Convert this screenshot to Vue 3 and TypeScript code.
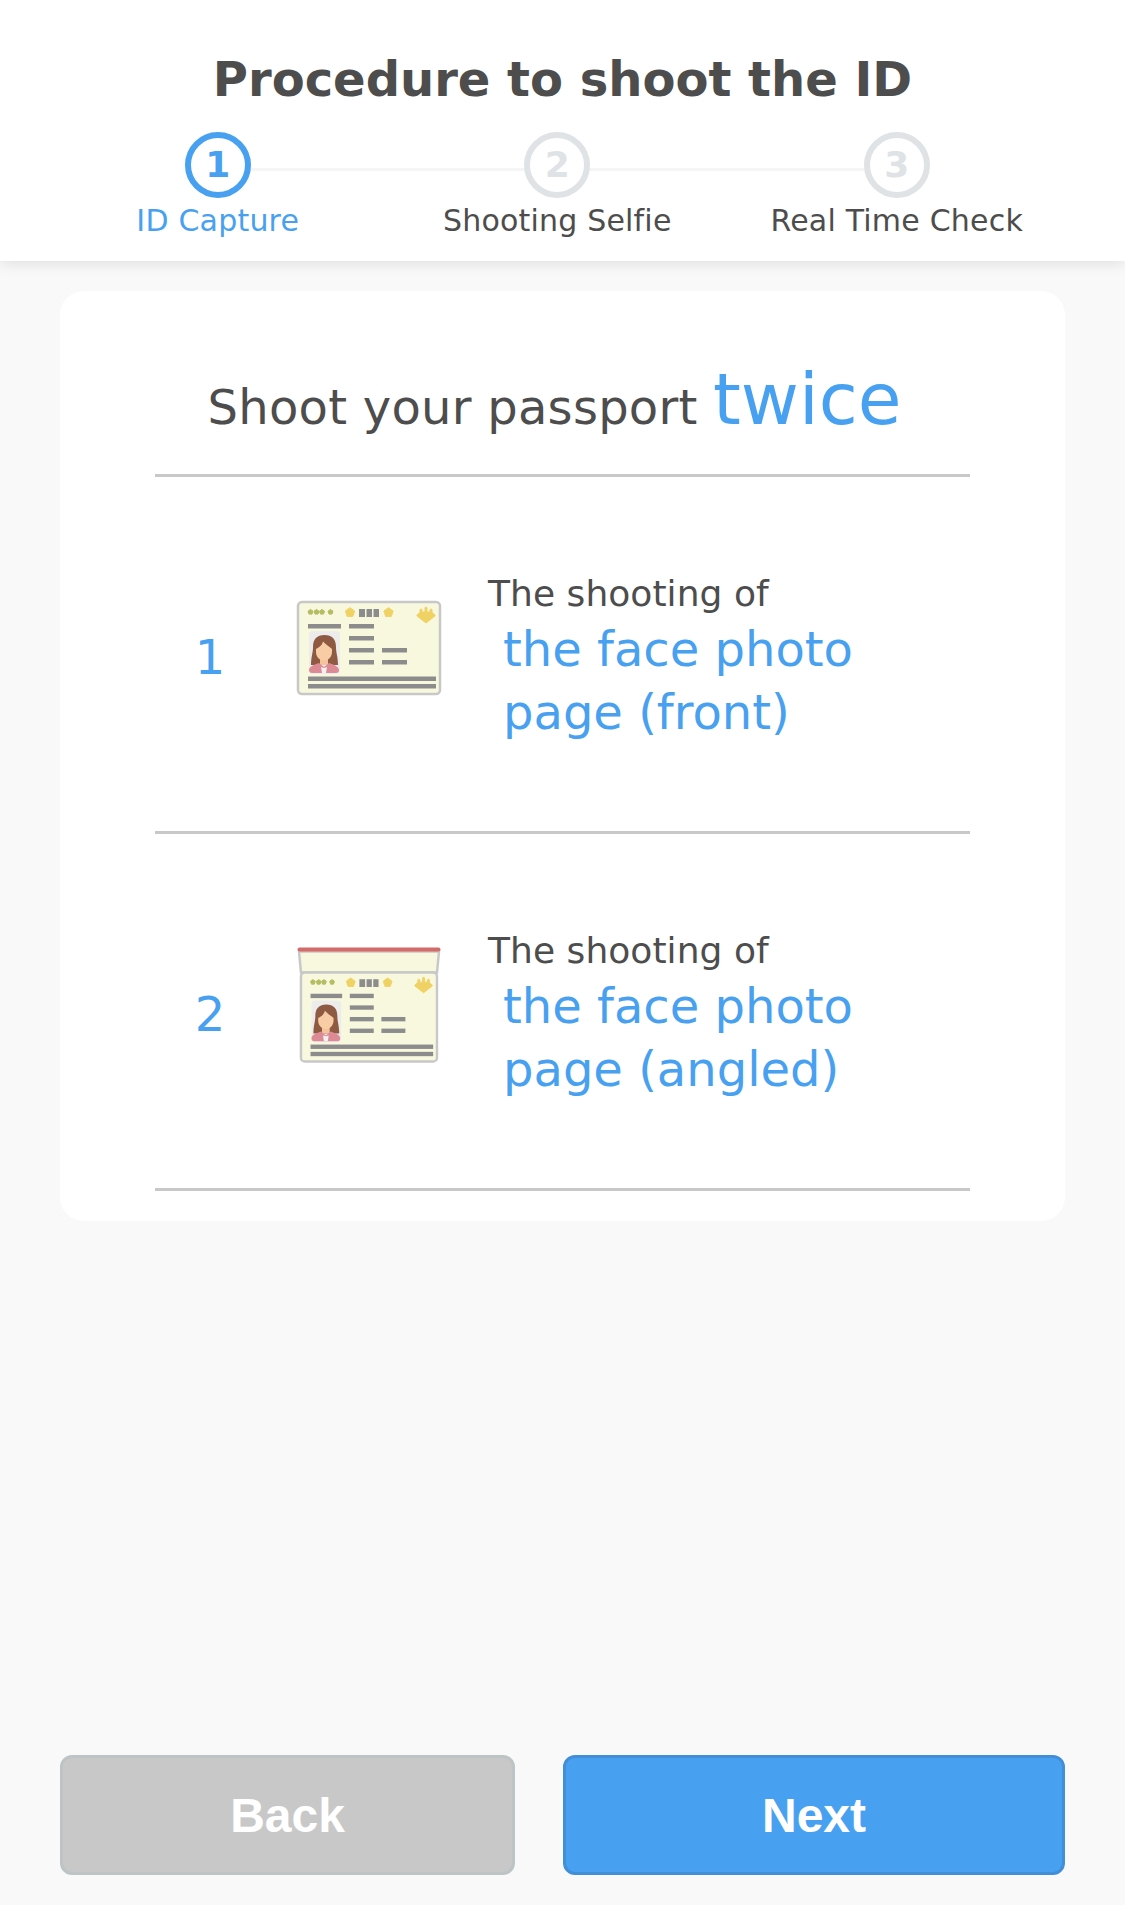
<script setup lang="ts">
const steps = [
  { no: 1, label: 'ID Capture', active: true },
  { no: 2, label: 'Shooting Selfie', active: false },
  { no: 3, label: 'Real Time Check', active: false },
]

const rows = [
  { no: 1, lines: ['the face photo', 'page (front)'], angled: false },
  { no: 2, lines: ['the face photo', 'page (angled)'], angled: true },
]

// grey bars on the card, [x, y, width]
const bars = [
  [28, 39, 33], [69, 39, 25], [69, 51, 25], [69, 63, 25], [102, 63, 25],
  [69, 75, 25], [102, 75, 25], [28, 91.5, 128], [28, 99, 128],
]

function pentagon(cx: number, cy: number, r: number): string {
  const pts: string[] = []
  for (let i = 0; i < 5; i++) {
    const a = -Math.PI / 2 + (i * 2 * Math.PI) / 5
    pts.push((cx + r * Math.cos(a)).toFixed(1) + ',' + (cy + r * Math.sin(a)).toFixed(1))
  }
  return pts.join(' ')
}
</script>

<template>
  <div class="page">
    <header class="head">
      <h1 class="title">Procedure to shoot the ID</h1>
      <div class="stepper">
        <div class="track"></div>
        <div v-for="s in steps" :key="s.no" class="step" :class="{ active: s.active }">
          <div class="circle">{{ s.no }}</div>
          <div class="label">{{ s.label }}</div>
        </div>
      </div>
    </header>

    <main class="card">
      <div class="card-title">Shoot your passport <span class="big">twice</span></div>
      <div v-for="r in rows" :key="r.no" class="row">
        <div class="num">{{ r.no }}</div>
        <svg class="pic" :viewBox="r.angled ? '14 0.5 150 150' : '14 -6 150 150'" width="150" height="150">
          <template v-if="r.angled">
            <path d="M19 16 H159 L157 37 H21 Z" fill="#f8f8de" stroke="#c8c8c8" stroke-width="2.5" />
            <rect x="17.500" y="12" width="143" height="4" rx="2" fill="#d46a6a" />
          </template>
          <g :transform="r.angled ? 'translate(3.7 20.5) scale(0.958 0.968)' : 'translate(0 0)'">
            <rect x="18" y="17" width="142" height="92" rx="4" fill="#f8f8de" stroke="#c8c8c8" stroke-width="2.5" />
            <polygon
              v-for="x in [30.5, 36.5, 42, 50.5]"
              :key="x"
              :points="pentagon(x, 27, 2.6)"
              fill="#b5bd63"
              stroke="#b5bd63"
              stroke-width="1"
              stroke-linejoin="round"
            />
            <g fill="#f0d264" stroke="#f0d264" stroke-width="1" stroke-linejoin="round">
              <polygon :points="pentagon(70, 27.5, 4.8)" />
              <polygon :points="pentagon(108.5, 27.5, 4.8)" />
              <path d="M137 30 L140 27.500 V24.500 Q141 23.500 142 24.500 V27 H145 V22.500 Q146 21.500 147 22.500 V27 H150 V24.500 Q151 23.500 152 24.500 V27.500 L155 30 V31 L146 38 L137 31 Z" />
            </g>
            <rect x="79" y="24" width="6" height="8" fill="#8c8c8c" />
            <rect x="86.500" y="24" width="5.500" height="8" fill="#8c8c8c" />
            <rect x="93.500" y="24" width="5.500" height="8" fill="#8c8c8c" />
            <rect v-for="b in bars" :key="b[0] + '-' + b[1]" :x="b[0]" :y="b[1]" :width="b[2]" height="4.500" fill="#8c8c8c" />
            <rect x="29" y="46" width="31" height="43" rx="4" fill="#ececec" />
            <path d="M31 80 C31 72 33 68 33 62 C33 54 37 50 44.500 50 C52 50 56 54 56 62 C56 68 58 72 58 80 Z" fill="#8f5a42" />
            <rect x="40" y="72" width="8" height="8" fill="#f4c39c" />
            <path d="M29 85 C29 82 33 80 39 78 L44 82 L49 78 C55 80 59 82 59 85 C59 87 58 88 56 88 H32 C30 88 29 87 29 85 Z" fill="#dd8a94" />
            <path d="M41 82 L44 83 L47 82 L46 88 H42 Z" fill="#f0f0f0" />
            <path d="M36 64 C38 63 42 61 43 56.500 C46 60 50 62 52 64 V67 C52 72 48 75.500 44 75.500 C40 75.500 36 72 36 67 Z" fill="#f8cda6" />
          </g>
        </svg>
        <div class="desc">
          <div class="desc-top">The shooting of</div>
          <div v-for="l in r.lines" :key="l" class="desc-line">{{ l }}</div>
        </div>
      </div>
    </main>

    <footer class="btns">
      <button class="btn back">Back</button>
      <button class="btn next">Next</button>
    </footer>
  </div>
</template>

<style scoped>
* {
  box-sizing: border-box;
}

.page {
  min-height: 1905px;
  background: #f9f9f9;
  display: flex;
  flex-direction: column;
  font-family: "DejaVu Sans", sans-serif;
  color: #4d4d4d;
}

.head {
  height: 261px;
  background: #fff;
  box-shadow: 0 3px 14px rgba(0, 0, 0, 0.1);
  padding-top: 51px;
}

.title {
  margin: 0;
  font-size: 48px;
  line-height: 56px;
  font-weight: bold;
  text-align: center;
  color: #4d4d4d;
}

.stepper {
  position: relative;
  width: 1018.5px;
  margin: 25px 0 0 48px;
  display: grid;
  grid-template-columns: repeat(3, 339.5px);
}

.track {
  position: absolute;
  left: 170px;
  right: 170px;
  top: 36px;
  height: 3px;
  background: #f5f5f5;
}

.step {
  position: relative;
  display: flex;
  flex-direction: column;
  align-items: center;
}

.circle {
  width: 66px;
  height: 66px;
  border-radius: 50%;
  border: 6px solid #dfe3e6;
  background: #fff;
  color: #dfe3e6;
  font-size: 36px;
  font-weight: bold;
  line-height: 54px;
  text-align: center;
}

.label {
  margin-top: 2px;
  font-size: 30px;
  line-height: 42px;
  letter-spacing: 0.2px;
  white-space: nowrap;
}

.active .circle {
  border-color: #48a1f0;
  color: #48a1f0;
}

.active .label {
  color: #48a1f0;
}

.card {
  margin: 30px 60px 0;
  height: 930px;
  background: #fff;
  border-radius: 24px;
  padding: 0 95px;
}

.card-title {
  height: 186px;
  padding: 67px 16px 0 0;
  border-bottom: 3px solid #c8c8c8;
  text-align: center;
  font-size: 48px;
  line-height: 84px;
  letter-spacing: 0.25px;
  white-space: nowrap;
}

.big {
  font-size: 71px;
  letter-spacing: 0;
  color: #48a1f0;
}

.row {
  height: 357px;
  border-bottom: 3px solid #c8c8c8;
  display: flex;
  align-items: center;
}

.num {
  width: 110px;
  padding-top: 6px;
  text-align: center;
  font-size: 48px;
  color: #48a1f0;
}

.pic {
  margin-left: 29px;
  flex: none;
}

.desc {
  margin-left: 44px;
  padding-top: 7px;
}

.desc-top {
  margin-bottom: 1px;
  font-size: 36px;
  line-height: 46px;
  letter-spacing: 0.05px;
}

.desc-line {
  margin-left: 15px;
  font-size: 48px;
  line-height: 63px;
  color: #48a1f0;
  white-space: nowrap;
}

.btns {
  margin-top: auto;
  padding: 0 60px 30px;
  display: flex;
  gap: 48px;
}

.btn {
  height: 120px;
  border: none;
  border-radius: 12px;
  font-family: "Liberation Sans", sans-serif;
  font-size: 48px;
  font-weight: bold;
  color: #fff;
}

.back {
  width: 455px;
  background: #c8c8c8;
  border: 3px solid #bcc4c6;
}

.next {
  flex: 1;
  background: #48a1f0;
  border: 3px solid #418fd8;
}
</style>
